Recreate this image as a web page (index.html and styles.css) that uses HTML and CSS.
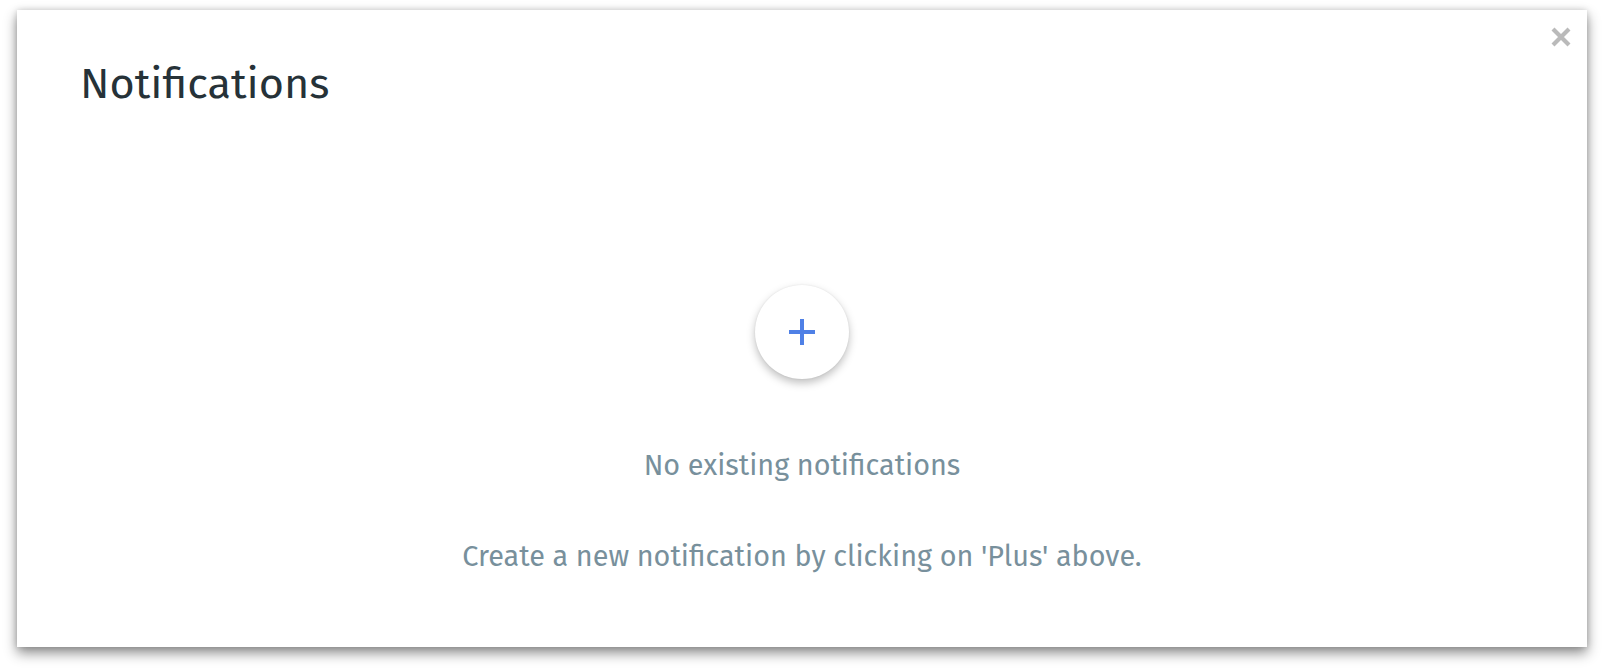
FILE: index.html
```html
<!DOCTYPE html>
<html>
<head>
    <meta charset='utf-8'>
    <title>Notifications</title>
    <meta name='viewport' content='width=device-width, initial-scale=1'>
    <link rel="stylesheet" href="styles.css">
</head>
<body>
    <div class="page">
        <div class="modal">
            <button class="close" title="Close">
                <svg width="20" height="20" viewBox="0 0 20 20">
                    <path d="M2 2 L18 18 M18 2 L2 18" stroke="currentColor" stroke-width="4.2" />
                </svg>
            </button>

            <h1 class="title">Notifications</h1>

            <div class="empty">
                <button class="add" title="Add notification">
                    <svg width="26" height="26" viewBox="0 0 26 26">
                        <path d="M13 0 V26 M0 13 H26" stroke="currentColor" stroke-width="4" />
                    </svg>
                </button>
                <p class="empty-head">No existing notifications</p>
                <p class="empty-hint">Create a new notification by clicking on 'Plus' above.</p>
            </div>
        </div>
    </div>
</body>
</html>
```

FILE: styles.css
```css
body {
    margin: 0;
    font-family: "Fira Sans", "Open Sans", "Noto Sans", sans-serif;
    background-color: #fff;
}
.page {
    padding: 10px 16px 23px 17px;
}
.modal {
    position: relative;
    background-color: #fff;
    box-shadow: 0 6px 12px rgba(0, 0, 0, .45), 0 0 6px rgba(0, 0, 0, .15);
    padding: 48px 63px 73px;
}
.close {
    position: absolute;
    top: 17px;
    right: 16px;
    border: 0;
    background: none;
    padding: 0;
    color: #bababa;
    cursor: pointer;
    display: flex;
}
.title {
    margin: 0;
    font-size: 43.2px;
    line-height: 52px;
    font-weight: 400;
    color: #263238;
}
.empty {
    display: flex;
    flex-direction: column;
    align-items: center;
    padding-top: 175px;
}
.add {
    width: 94px;
    height: 94px;
    border-radius: 50%;
    border: 0;
    background-color: #fff;
    color: #4f80e6;
    box-shadow: 0 4px 8px rgba(0, 0, 0, .25), 0 0 2px rgba(0, 0, 0, .08);
    display: flex;
    align-items: center;
    justify-content: center;
    cursor: pointer;
}
.empty p {
    margin: 0;
    font-size: 28.8px;
    line-height: 34.6px;
    color: #78909c;
}
.empty-head {
    margin-top: 70px !important;
}
.empty-hint {
    margin-top: 56px !important;
}
```
